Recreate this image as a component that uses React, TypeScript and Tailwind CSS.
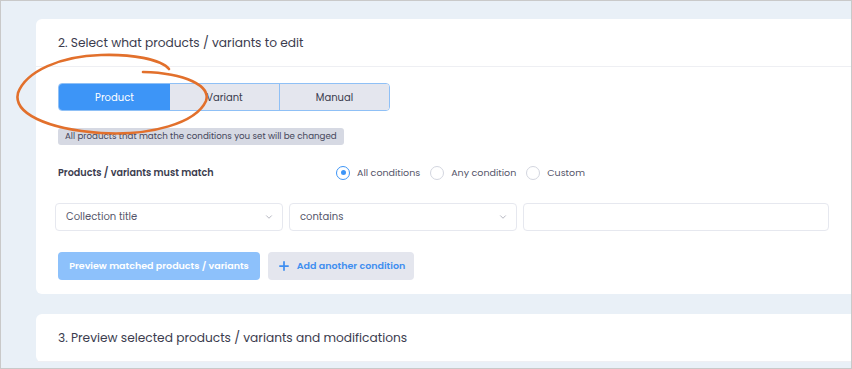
import { ChevronDown, Plus } from 'lucide-react';

const font = { fontFamily: 'Poppins, Inter, "Noto Sans", sans-serif' };

function Radio({ label, checked }: { label: string; checked?: boolean }) {
  return (
    <div className="flex items-center gap-[7px]">
      <span
        className={`flex h-[14px] w-[14px] items-center justify-center rounded-full border ${
          checked ? 'border-[#3d95f7]' : 'border-[#d3d6df]'
        }`}
      >
        {checked && <span className="h-[5px] w-[5px] rounded-full bg-[#3d95f7]" />}
      </span>
      <span className="text-[9.5px] text-[#55566a]">{label}</span>
    </div>
  );
}

function Select({ value, width }: { value: string; width: string }) {
  return (
    <div
      className={`flex h-[28px] ${width} items-center justify-between rounded-[4px] border border-[#e6e8ef] bg-white pl-[10px] pr-[8px]`}
    >
      <span className="text-[10px] text-[#55566a]">{value}</span>
      <ChevronDown size={10} strokeWidth={1.5} className="text-[#8a8c9c]" />
    </div>
  );
}

export default function App() {
  return (
    <div
      className="relative h-[369px] w-[852px] overflow-hidden border border-[#c9c9c9] bg-[#e9f0f7]"
      style={font}
    >
      <div className="ml-[35px] mt-[18px] rounded-l-[6px] bg-white">
        {/* Section header */}
        <div className="flex h-[48px] items-center border-b border-[#eeeff3] pl-[22px] pt-[1px]">
          <h2 className="text-[12.2px] text-[#3b3c4e]">2. Select what products / variants to edit</h2>
        </div>

        <div className="pb-[14px] pl-[22px] pt-[16px]">
          {/* Mode tabs */}
          <div className="flex h-[28px] w-[332px] overflow-hidden rounded-[4px] border border-[#8fc0f6] text-[10px]">
            <div className="flex w-[111px] items-center justify-center bg-[#3d95f7] text-white">Product</div>
            <div className="flex w-[110px] items-center justify-center border-r border-[#8fc0f6] bg-[#e4e6ee] text-[#3b3c4e]">
              Variant
            </div>
            <div className="flex flex-1 items-center justify-center bg-[#e4e6ee] text-[#3b3c4e]">Manual</div>
          </div>

          <div className="mt-[17px] inline-flex h-[17px] items-center rounded-[3px] bg-[#d6d9e3] px-[7px] text-[8.7px] text-[#45465a]">
            All products that match the conditions you set will be changed
          </div>

          {/* Match condition */}
          <div className="mt-[18px] flex h-[18px] items-center">
            <span className="w-[278px] text-[9.6px] font-semibold text-[#3b3c4e]">Products / variants must match</span>
            <div className="flex items-center gap-[10px]">
              <Radio label="All conditions" checked />
              <Radio label="Any condition" />
              <Radio label="Custom" />
            </div>
          </div>

          <div className="-ml-[3px] mt-[21px] flex gap-[6px]">
            <Select value="Collection title" width="w-[228px]" />
            <Select value="contains" width="w-[228px]" />
            <div className="h-[28px] w-[306px] rounded-[4px] border border-[#e6e8ef] bg-white" />
          </div>

          <div className="mt-[21px] flex gap-[8px]">
            <button className="h-[28px] w-[202px] rounded-[4px] bg-[#8dc1fb] text-[9.5px] font-semibold text-white">
              Preview matched products / variants
            </button>
            <button className="flex h-[28px] w-[146px] items-center justify-center gap-[6px] rounded-[4px] bg-[#e4e6ee] text-[9.5px] font-semibold text-[#3f8ef0]">
              <Plus size={14} strokeWidth={3} />
              Add another condition
            </button>
          </div>
        </div>
      </div>

      <div className="ml-[35px] mt-[20px] rounded-l-[6px] bg-white">
        <div className="flex h-[48px] items-center border-b border-[#eeeff3] pl-[22px] pt-[2px]">
          <h2 className="text-[12.2px] text-[#3b3c4e]">3. Preview selected products / variants and modifications</h2>
        </div>
      </div>

      {/* Hand-drawn highlight */}
      <svg className="pointer-events-none absolute left-0 top-0" width="852" height="369">
        <path
          d="M168,68 C160,58 130,53 100,54 C60,55 25,70 17,92 C12,112 45,128 100,132 C150,135 195,122 205,100 C210,85 185,72 142,71"
          fill="none"
          stroke="#e2702c"
          strokeWidth="2.6"
          strokeLinecap="round"
        />
      </svg>
    </div>
  );
}
